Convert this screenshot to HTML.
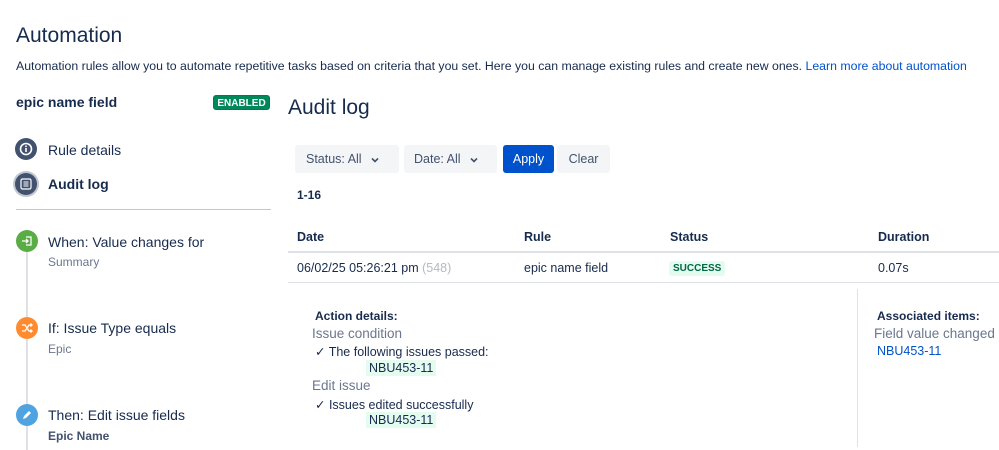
<!DOCTYPE html>
<html><head><meta charset="utf-8"><style>
*{margin:0;padding:0;box-sizing:border-box}
body{width:999px;height:450px;overflow:hidden;background:#fff;font-family:"Liberation Sans",Arial,sans-serif;color:#172b4d;position:relative}
.a{position:absolute;white-space:nowrap}
.ic{position:absolute;width:22px;height:22px;border-radius:50%;display:flex;align-items:center;justify-content:center}
.lz{background:#e3fcef;color:#172b4d;padding:1px 3px}
.chev{display:inline-block;margin-left:9px;vertical-align:middle}
</style></head><body>
<div class="a" style="left:16px;top:24px;font-size:21px;color:#172b4d">Automation</div>
<div class="a" style="left:16px;top:59px;font-size:12.3px;color:#172b4d">Automation rules allow you to automate repetitive tasks based on criteria that you set. Here you can manage existing rules and create new ones. <span style="color:#0052cc">Learn more about automation</span></div>

<div class="a" style="left:16px;top:94px;font-size:14px;font-weight:bold">epic name field</div>
<div class="a" style="left:213px;top:95px;width:57px;height:15px;background:#00875a;color:#fff;font-size:10px;font-weight:bold;text-align:center;line-height:15px;border-radius:3px;border:1px solid #0a7a45">ENABLED</div>

<div class="ic" style="left:15px;top:138px;background:#42526e"><svg width="14" height="14" viewBox="0 0 14 14"><circle cx="7" cy="7" r="5.5" fill="none" stroke="#fff" stroke-width="1.6"/><rect x="6.2" y="6" width="1.6" height="4" fill="#fff"/><circle cx="7" cy="4.3" r=".9" fill="#fff"/></svg></div>
<div class="a" style="left:48px;top:142px;font-size:14px">Rule details</div>
<div class="ic" style="left:15px;top:173px;background:#42526e;box-shadow:0 0 0 2px #c1c7d0"><svg width="12" height="12" viewBox="0 0 12 12"><rect x="1" y="1" width="10" height="10" rx="1.5" fill="none" stroke="#fff" stroke-width="1.2"/><path d="M3.5 4h5M3.5 6h5M3.5 8h5" stroke="#fff" stroke-width="1"/></svg></div>
<div class="a" style="left:48px;top:176px;font-size:14px;font-weight:bold">Audit log</div>
<div class="a" style="left:16px;top:209px;width:255px;height:1px;background:#c1c7d0"></div>

<div class="a" style="left:26px;top:250px;width:2px;height:200px;background:#dfe1e6"></div>
<div class="ic" style="left:16px;top:230px;background:#5aac44"><svg width="12" height="12" viewBox="0 0 12 12"><path d="M1 6h6M5 4l2 2-2 2M5 2h5v8H5" fill="none" stroke="#fff" stroke-width="1.3"/></svg></div>
<div class="a" style="left:48px;top:234px;font-size:14px">When: Value changes for</div>
<div class="a" style="left:48px;top:255px;font-size:12px;color:#6b778c">Summary</div>
<div class="ic" style="left:16px;top:317px;background:#ff8b30"><svg width="12" height="12" viewBox="0 0 12 12"><path d="M1 3h3l4 6h3M1 9h3l4-6h3M9.5 1.5L11 3 9.5 4.5M9.5 7.5L11 9 9.5 10.5" fill="none" stroke="#fff" stroke-width="1.3"/></svg></div>
<div class="a" style="left:48px;top:320px;font-size:14px">If: Issue Type equals</div>
<div class="a" style="left:48px;top:342px;font-size:12px;color:#6b778c">Epic</div>
<div class="ic" style="left:16px;top:404px;background:#4fa3e0"><svg width="12" height="12" viewBox="0 0 12 12"><path d="M2 10l1-3 5-5 2 2-5 5z" fill="#fff"/></svg></div>
<div class="a" style="left:48px;top:407px;font-size:14px">Then: Edit issue fields</div>
<div class="a" style="left:48px;top:429px;font-size:12px;font-weight:bold;color:#42526e">Epic Name</div>

<div class="a" style="left:288px;top:96px;font-size:21px">Audit log</div>
<div class="a" style="left:295px;top:145px;width:104px;height:28px;background:#f4f5f7;border-radius:3px;font-size:12.5px;color:#42526e;line-height:28px;padding-left:11px">Status: All<svg class="chev" width="8" height="6" viewBox="0 0 8 6"><path d="M1 1.5l3 3 3-3" fill="none" stroke="#42526e" stroke-width="1.6"/></svg></div>
<div class="a" style="left:404px;top:145px;width:93px;height:28px;background:#f4f5f7;border-radius:3px;font-size:12.5px;color:#42526e;line-height:28px;padding-left:10px">Date: All<svg class="chev" width="8" height="6" viewBox="0 0 8 6"><path d="M1 1.5l3 3 3-3" fill="none" stroke="#42526e" stroke-width="1.6"/></svg></div>
<div class="a" style="left:503px;top:145px;width:51px;height:28px;background:#0052cc;border-radius:3px;font-size:12.5px;color:#fff;line-height:28px;text-align:center">Apply</div>
<div class="a" style="left:557px;top:145px;width:53px;height:28px;background:#f4f5f7;border-radius:3px;font-size:12.5px;color:#42526e;line-height:28px;text-align:center">Clear</div>
<div class="a" style="left:297px;top:188px;font-size:12px;font-weight:bold">1-16</div>

<div class="a" style="left:297px;top:230px;font-size:12.5px;font-weight:bold">Date</div>
<div class="a" style="left:524px;top:230px;font-size:12.5px;font-weight:bold">Rule</div>
<div class="a" style="left:670px;top:230px;font-size:12.5px;font-weight:bold">Status</div>
<div class="a" style="left:878px;top:230px;font-size:12.5px;font-weight:bold">Duration</div>
<div class="a" style="left:288px;top:251px;width:711px;height:2px;background:#dfe1e6"></div>
<div class="a" style="left:297px;top:261px;font-size:12.5px">06/02/25 05:26:21 pm <span style="color:#b3bac5">(548)</span></div>
<div class="a" style="left:524px;top:261px;font-size:12.5px">epic name field</div>
<div class="a" style="left:669px;top:261px;height:15px;padding:0 4px;background:#e3fcef;color:#006644;font-size:10px;font-weight:bold;line-height:15px;border-radius:3px">SUCCESS</div>
<div class="a" style="left:878px;top:261px;font-size:12.5px">0.07s</div>
<div class="a" style="left:288px;top:282px;width:711px;height:1px;background:#dfe1e6"></div>

<div class="a" style="left:315px;top:309px;font-size:12px;font-weight:bold">Action details:</div>
<div class="a" style="left:312px;top:326px;font-size:13.5px;color:#6b778c">Issue condition</div>
<div class="a" style="left:315px;top:344px;font-size:12.5px">✓ The following issues passed:</div>
<div class="a" style="left:366px;top:361px;font-size:12.5px" ><span class="lz">NBU453-11</span></div>
<div class="a" style="left:312px;top:378px;font-size:13.5px;color:#6b778c">Edit issue</div>
<div class="a" style="left:315px;top:397px;font-size:12.5px">✓ Issues edited successfully</div>
<div class="a" style="left:366px;top:413px;font-size:12.5px"><span class="lz">NBU453-11</span></div>

<div class="a" style="left:857px;top:289px;width:1px;height:158px;background:#dfe1e6"></div>
<div class="a" style="left:877px;top:309px;font-size:12px;font-weight:bold">Associated items:</div>
<div class="a" style="left:874px;top:326px;font-size:13.5px;color:#6b778c">Field value changed</div>
<div class="a" style="left:877px;top:344px;font-size:12.5px;color:#0052cc">NBU453-11</div>
</body></html>
